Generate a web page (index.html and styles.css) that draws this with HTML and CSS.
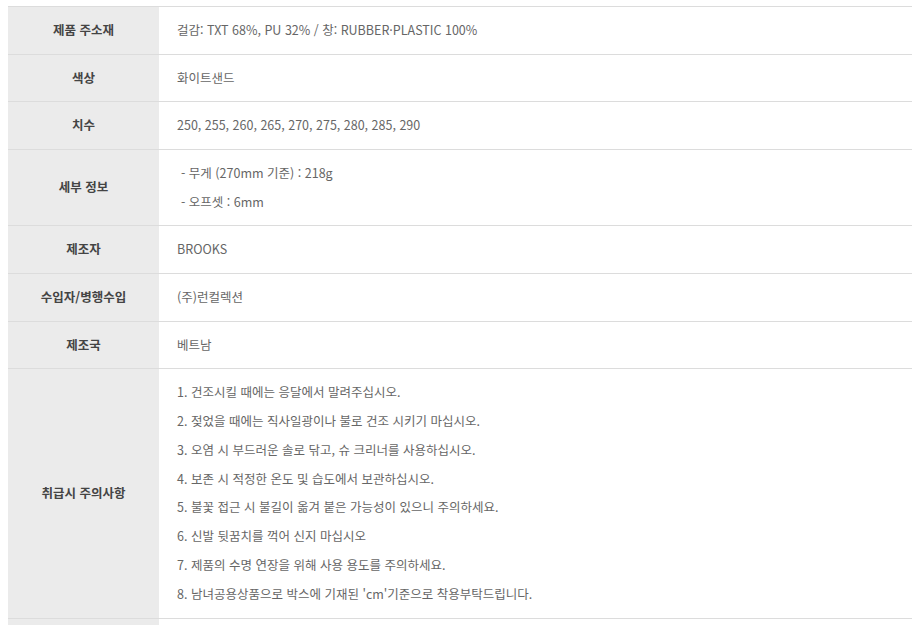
FILE: index.html
```html
<!DOCTYPE html>
<html lang="ko">
<head>
<meta charset="utf-8">
<link rel="stylesheet" href="styles.css">
</head>
<body>
<table class="spec">
  <colgroup><col class="c-th"><col></colgroup>
  <tbody>
    <tr><th>제품 주소재</th><td>걸감: TXT 68%, PU 32% / 창: RUBBER·PLASTIC 100%</td></tr>
    <tr><th>색상</th><td>화이트샌드</td></tr>
    <tr><th>치수</th><td>250, 255, 260, 265, 270, 275, 280, 285, 290</td></tr>
    <tr><th>세부 정보</th><td class="indent"><p>- 무게 (270mm 기준) : 218g</p><p>- 오프셋 : 6mm</p></td></tr>
    <tr><th>제조자</th><td>BROOKS</td></tr>
    <tr><th>수입자/병행수입</th><td>(주)런컬렉션</td></tr>
    <tr><th>제조국</th><td>베트남</td></tr>
    <tr><th>취급시 주의사항</th><td>
      <p>1. 건조시킬 때에는 응달에서 말려주십시오.</p>
      <p>2. 젖었을 때에는 직사일광이나 불로 건조 시키기 마십시오.</p>
      <p>3. 오염 시 부드러운 솔로 닦고, 슈 크리너를 사용하십시오.</p>
      <p>4. 보존 시 적정한 온도 및 습도에서 보관하십시오.</p>
      <p>5. 불꽃 접근 시 불길이 옮겨 붙은 가능성이 있으니 주의하세요.</p>
      <p>6. 신발 뒷꿈치를 꺽어 신지 마십시오</p>
      <p>7. 제품의 수명 연장을 위해 사용 용도를 주의하세요.</p>
      <p>8. 남녀공용상품으로 박스에 기재된 'cm'기준으로 착용부탁드립니다.</p>
    </td></tr>
    <tr><th>&nbsp;</th><td>&nbsp;</td></tr>
  </tbody>
</table>
</body>
</html>
```
FILE: styles.css
```css
html, body { background: #fff; }
body {
  margin: 6px 0 0 8px;
  font-family: "Noto Sans CJK KR", "Noto Sans", sans-serif;
  font-size: 12.5px;
  overflow: hidden;
}
.spec {
  width: 100%;
  border-collapse: collapse;
  border-top: 1px solid #dcdcdc;
}
.c-th { width: 151px; }
.spec th, .spec td {
  border-bottom: 1px solid #dcdcdc;
  padding: 9px 18px;
  line-height: 28.6px;
  vertical-align: middle;
}
.spec th {
  background: #ebebeb;
  color: #444;
  font-weight: 700;
  text-align: center;
  padding: 9px 4px;
}
.spec td {
  color: #666;
  text-align: left;
}
.spec td p { margin: 0; line-height: 28.8px; }
.spec td.indent p { padding-left: 4px; }
```
